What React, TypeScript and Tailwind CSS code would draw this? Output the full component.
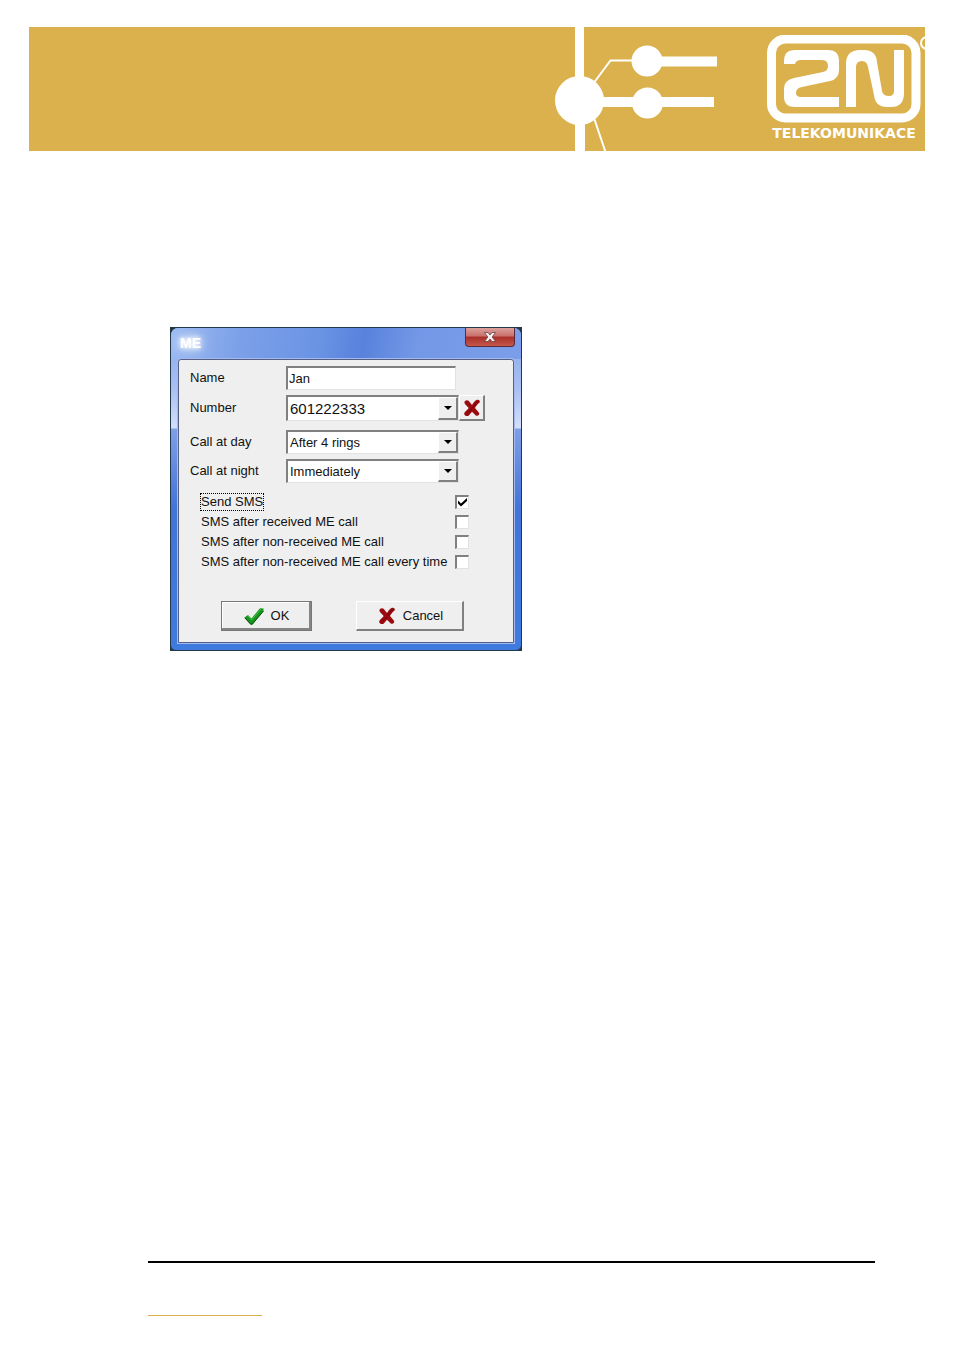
import React, { useState } from 'react';

const dayOptions = ['After 4 rings', 'Immediately', 'Never'];
const nightOptions = ['Immediately', 'After 4 rings', 'Never'];

const smsOptions = [
  { id: 'sms-received', label: 'SMS after received ME call' },
  { id: 'sms-missed', label: 'SMS after non-received ME call' },
  { id: 'sms-always', label: 'SMS after non-received ME call every time' },
];

const sunken = 'border-t-2 border-l-2 border-t-[#808080] border-l-[#808080] border-r border-b border-r-[#e2e2e2] border-b-[#e2e2e2]';
const raised = 'border-t border-l border-t-white border-l-white border-r-2 border-b-2 border-r-[#808080] border-b-[#808080]';

const RedCross: React.FC = () => (
  <svg viewBox="0 0 18 18" className="w-[18px] h-[18px] shrink-0" aria-hidden="true">
    <path d="M1.800 2.200C3.500 .5 6 1.500 6.800 3.200L9 6C10.500 3.500 12 1.500 14 .8C16.500 .4 17.600 2.500 16.400 3.800C14.400 5.200 13 7 12 9L16 13.700C17 15.700 14.800 17.500 12.800 16.400L9 12.700C7.800 14 6.800 15.400 5.800 16.600C4 18 .6 16.400 1.200 14C2.800 12 4.600 10.500 5.700 9L2.400 5.400C1.300 4.200 1.200 3 1.800 2.200Z" fill="#9c0a0f" />
    <path d="M14.800 2.500C12.500 4 11 6.500 9.500 9C7.500 11 5.500 13 3.500 14.800" fill="none" stroke="#6d0509" strokeWidth="1" />
  </svg>
);

const GreenCheck: React.FC = () => (
  <svg viewBox="0 0 20 18" className="w-[20px] h-[18px] shrink-0" aria-hidden="true">
    <path d="M.5 10.500L4 8L7.500 11.500L16 1.200L19.500 1.500V4L8.500 17.400H6.500Z" fill="#16961c" />
    <path d="M.8 10.800L6.700 17.200H8.300L19.500 4" fill="none" stroke="#0a4a12" strokeWidth="1" />
    <path d="M4 9L7.500 13L17 2.200" fill="none" stroke="#3cc63c" strokeWidth="1" />
  </svg>
);

type ComboProps = {
  id: string;
  options: string[];
  className: string;
};

const Combo: React.FC<ComboProps> = ({ id, options, className }) => (
  <div className={`relative w-[173px] bg-white ${sunken} ${className}`}>
    <select id={id} className="appearance-none w-full h-full pl-[2px] pr-[22px] bg-transparent outline-none">
      {options.map((option) => (
        <option key={option}>{option}</option>
      ))}
    </select>
    <span className={`absolute top-0 right-0 bottom-0 w-[20px] flex items-center justify-center bg-[#efefef] pointer-events-none ${raised}`}>
      <svg viewBox="0 0 8 4" className="w-[8px] h-[4px]" aria-hidden="true">
        <path d="M0 0H8L4 4Z" fill="#000" />
      </svg>
    </span>
  </div>
);

type CheckProps = {
  id: string;
  label: string;
  focused?: boolean;
  defaultChecked?: boolean;
};

const CheckRow: React.FC<CheckProps> = ({ id, label, focused, defaultChecked = false }) => {
  const [checked, setChecked] = useState(defaultChecked);
  return (
    <div className="flex items-center justify-between h-5">
      <label htmlFor={id} className={`whitespace-nowrap border border-dotted ${focused ? 'border-black' : 'border-transparent'}`}>
        {label}
      </label>
      <span className="relative flex">
        <input
          id={id}
          type="checkbox"
          checked={checked}
          onChange={(e) => setChecked(e.target.checked)}
          className={`appearance-none w-[14px] h-[14px] bg-white ${sunken}`}
        />
        {checked && (
          <svg viewBox="0 0 14 14" className="absolute inset-0 w-[14px] h-[14px] pointer-events-none" aria-hidden="true">
            <path d="M3 5.500V8.500L6 11.500L12 6V3L6 8.500Z" fill="#000" />
          </svg>
        )}
      </span>
    </div>
  );
};

const Banner: React.FC = () => (
  <header className="flex justify-end h-[124px] bg-[#dab14c]">
    <svg viewBox="0 0 170 124" className="w-[170px] h-[124px] shrink-0" aria-hidden="true">
      <g fill="#fff">
        <path d="M20 0H29V60H20ZM20 70H30V124H20Z" />
        <circle cx="24.500" cy="73.500" r="24.500" />
        <circle cx="92" cy="34" r="15.500" />
        <circle cx="92.500" cy="76" r="15.500" />
        <path d="M92 29.500H162V39.500H92ZM40 70H159V80H40Z" />
      </g>
      <path d="M38 57L55.500 33.500H80M39 91L50.500 125" fill="none" stroke="#fff" strokeWidth="2" />
    </svg>
    <div className="flex flex-col items-center ml-[38px] w-[162px] pt-2 overflow-hidden">
      <svg viewBox="0 0 162 88" className="w-[162px] h-[88px] shrink-0" role="img" aria-label="2N">
        <rect x="8.500" y="4" width="144.500" height="79" rx="14" fill="none" stroke="#fff" strokeWidth="9" />
        <path d="M21 29V26Q21 15 32 15H65Q76 15 76 26V35Q76 44 67 46L39 52Q33 53 33 58Q33 62 38 62H76V72H32Q21 72 21 62V54Q21 45 31 43L60 37Q65 36 65 31Q65 25 59 25H38Q33 25 32 29Z" fill="#fff" />
        <path d="M83 72V29Q83 15 97 15H101Q113 15 114 27L119 56Q120 61 126 61Q131 61 131 56V15H141V58Q141 72 128 72H124Q112 72 111 60L105 32Q104 26 99 26Q93 26 93 32V72Z" fill="#fff" />
        <circle cx="164" cy="8" r="6" fill="none" stroke="#fff" strokeWidth="2" />
      </svg>
      <p className="mt-[2px] font-['DejaVu_Sans',sans-serif] text-[14px] leading-[16px] font-bold text-white">TELEKOMUNIKACE</p>
    </div>
  </header>
);

const MeDialog: React.FC = () => (
  <section
    aria-labelledby="dialog-title"
    className="w-[352px] bg-[#26383f] font-['Liberation_Sans',Arial,sans-serif] text-[13px] leading-4 text-[#111]"
  >
    <div className="border border-[#20394b] rounded-t-[8px] rounded-b-[6px] overflow-hidden bg-[linear-gradient(to_bottom,#86a8ea_0px,#a9bff2_60px,#d3defa_100px,#7f9fe6_101px,#4374d8_180px,#3f7bdf_100%)] px-[7px] pb-[7px]">
      <div className="-mx-[7px] flex justify-between items-start h-[31px] pl-[9px] pr-[6px] bg-[linear-gradient(100deg,#9dbbf2_0%,#7ca0e8_20%,#6a94e4_42%,#5882dc_55%,#7398e6_70%,#7c9eea_100%)]">
        <h1 id="dialog-title" className="pt-[7px] text-[14px] font-bold text-white [text-shadow:0_0_4px_#fff,0_0_8px_#fff,0_0_14px_#fff]">ME</h1>
        <button type="button" aria-label="Close" className="flex items-center justify-center w-[50px] h-[19px] rounded-b-[4px] border border-t-0 border-[#5b2b3c] bg-[linear-gradient(to_bottom,#dca09b_0%,#c8706b_45%,#a92f29_50%,#c4574b_100%)]">
          <svg viewBox="0 0 12 10" className="w-[12px] h-[10px]" aria-hidden="true">
            <path d="M.5 .5H4L6 3L8 .5H11.500L8.200 5L11.500 9.500H8L6 7L4 9.500H.5L3.800 5Z" fill="#f4eeee" stroke="#704048" strokeWidth=".8" />
          </svg>
        </button>
      </div>
      <form className="border border-[#555f86] rounded-t-[3px] bg-[#efefef] pt-[6px] pb-[11px] pl-[11px] shadow-[0_0_0_1px_#a3baf0]" onSubmit={(e) => e.preventDefault()}>
        <div className="grid grid-cols-[96px_1fr] items-center gap-y-[5px]">
          <label htmlFor="name">Name</label>
          <input id="name" type="text" defaultValue="Jan" className={`w-[170px] h-[24px] pl-[1px] bg-white outline-none ${sunken}`} />
          <label htmlFor="number">Number</label>
          <div className="flex">
            <Combo id="number" options={['601222333']} className="h-[26px] text-[15px]" />
            <button type="button" aria-label="Delete number" className={`flex items-center justify-center w-[26px] h-[26px] bg-[#efefef] ${raised}`}>
              <RedCross />
            </button>
          </div>
        </div>
        <div className="grid grid-cols-[96px_1fr] items-center gap-y-[5px] mt-[9px]">
          <label htmlFor="day">Call at day</label>
          <Combo id="day" options={dayOptions} className="h-[24px]" />
          <label htmlFor="night">Call at night</label>
          <Combo id="night" options={nightOptions} className="h-[24px]" />
        </div>
        <div className="mt-[9px] ml-[10px] w-[269px]">
          <CheckRow id="send-sms" label="Send SMS" focused defaultChecked />
          {smsOptions.map((option) => (
            <CheckRow key={option.id} id={option.id} label={option.label} />
          ))}
        </div>
        <div className="flex gap-[44px] mt-[29px] ml-[31px]">
          <button type="submit" className="flex items-center justify-center gap-[7px] w-[91px] h-[30px] border border-[#777] bg-[#efefef] shadow-[inset_-2px_-2px_0_#858585,inset_1px_1px_0_#fff]">
            <GreenCheck />
            OK
          </button>
          <button type="button" className={`flex items-center justify-center gap-[7px] w-[108px] h-[30px] pl-[2px] bg-[#efefef] ${raised}`}>
            <RedCross />
            Cancel
          </button>
        </div>
      </form>
    </div>
  </section>
);

const App: React.FC = () => {
  return (
    <div className="flex flex-col min-h-screen bg-white px-[29px] pt-[27px] pb-[33px]">
      <Banner />
      <main className="mt-[176px] ml-[141px]">
        <MeDialog />
      </main>
      <footer className="mt-auto ml-[119px] mr-[50px]">
        <div className="h-[2px] bg-black"></div>
        <div className="mt-[52px] w-[114px] h-px bg-[#dab14c]"></div>
      </footer>
    </div>
  );
};

export default App;
